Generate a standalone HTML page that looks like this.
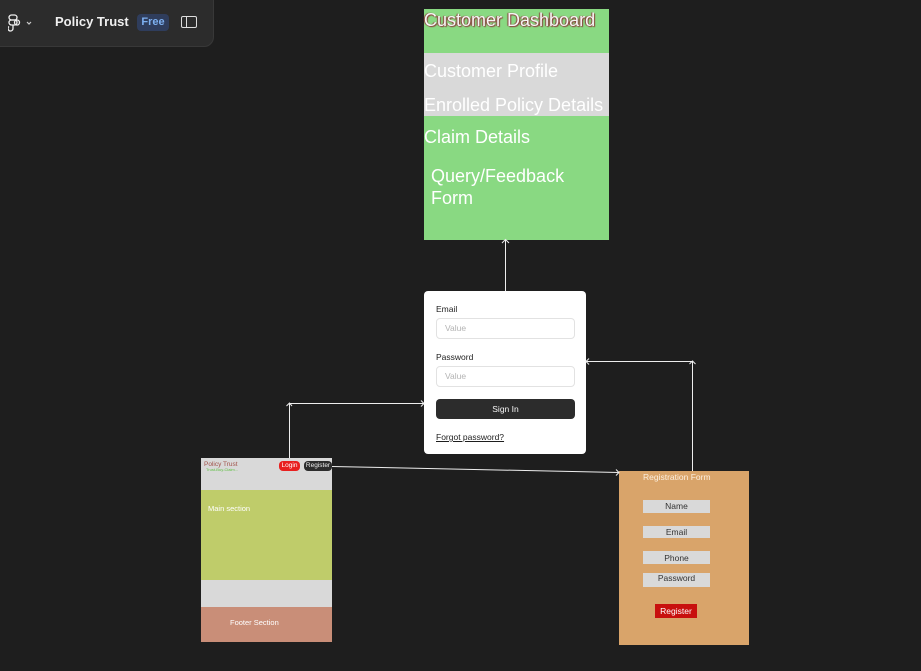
<!DOCTYPE html>
<html><head><style>
body{margin:0;width:921px;height:671px;background:#1e1e1e;position:relative;overflow:hidden;font-family:"Liberation Sans",sans-serif}
.a{position:absolute}
.d{font-size:18px;color:#fff}
</style></head><body>
<div class="a" style="left:-10px;top:-10px;width:222px;height:55px;background:#2c2c2c;border-radius:10px;border:1px solid #383838"></div>
<svg class="a" style="left:8px;top:14px" width="30" height="18" viewBox="0 0 30 18"><g fill="none" stroke="#eee" stroke-width="1.3"><rect x="1" y="1" width="8" height="5" rx="2.5"/><rect x="1" y="6" width="8" height="5" rx="2.5"/><path d="M5 11v3.5a2.5 2.5 0 1 1-4-2"/><circle cx="9" cy="8.5" r="2.5"/></g><path d="M19 8l2 2 2-2" stroke="#ccc" fill="none" stroke-width="1.2"/></svg>
<div class="a" style="left:55px;top:14px;color:#f0f0f0;font-weight:bold;font-size:13px">Policy Trust</div>
<div class="a" style="left:137px;top:14px;width:32px;height:17px;background:#2f3d5c;border-radius:4px;color:#7db0f0;font-size:11px;font-weight:bold;text-align:center;line-height:17px">Free</div>
<div class="a" style="left:181px;top:16px;width:14px;height:10px;border:1.3px solid #ddd;border-radius:2px"></div>
<div class="a" style="left:186px;top:16px;width:1.3px;height:12px;background:#ddd"></div>

<div class="a" style="left:424px;top:9px;width:185px;height:231px;background:#89d982"></div>
<div class="a" style="left:424px;top:53px;width:185px;height:63px;background:#d9d9d9"></div>
<div class="a d" style="left:424px;top:10px;color:#f6f6f6;text-shadow:1px 1px 1px #8a3a3a,-1px 0 1px #8a3a3a">Customer Dashboard</div>
<div class="a d" style="left:424px;top:61px">Customer Profile</div>
<div class="a d" style="left:424px;top:95px">Enrolled Policy Details</div>
<div class="a d" style="left:424px;top:127px">Claim Details</div>
<div class="a d" style="left:431px;top:165px;line-height:22px">Query/Feedback<br>Form</div>

<div class="a" style="left:424px;top:291px;width:162px;height:163px;background:#fff;border-radius:4px"></div>
<div class="a" style="left:436px;top:304px;font-size:8.5px;color:#1e1e1e">Email</div>
<div class="a" style="left:436px;top:318px;width:137px;height:19px;border:1px solid #e2e2e2;border-radius:4px;font-size:8.5px;color:#b3b3b3;line-height:19px;text-indent:8px">Value</div>
<div class="a" style="left:436px;top:352px;font-size:8.5px;color:#1e1e1e">Password</div>
<div class="a" style="left:436px;top:366px;width:137px;height:19px;border:1px solid #e2e2e2;border-radius:4px;font-size:8.5px;color:#b3b3b3;line-height:19px;text-indent:8px">Value</div>
<div class="a" style="left:436px;top:399px;width:139px;height:20px;background:#2c2c2c;border-radius:4px;font-size:8.5px;color:#f5f5f5;text-align:center;line-height:20px">Sign In</div>
<div class="a" style="left:436px;top:432px;font-size:8.5px;color:#1e1e1e;text-decoration:underline">Forgot password?</div>

<div class="a" style="left:201px;top:458px;width:131px;height:32px;background:#d9d9d9"></div>
<div class="a" style="left:201px;top:490px;width:131px;height:90px;background:#bfcc6a"></div>
<div class="a" style="left:201px;top:580px;width:131px;height:27px;background:#d9d9d9"></div>
<div class="a" style="left:201px;top:607px;width:131px;height:35px;background:#c98e78"></div>
<div class="a" style="left:204px;top:461px;font-size:6.5px;color:#a0524a">Policy Trust</div>
<div class="a" style="left:206px;top:467px;font-size:4px;color:#5cbf40">Trust-Buy-Claim...</div>
<div class="a" style="left:279px;top:461px;width:21px;height:10px;background:#e8201f;border-radius:4px;font-size:6.5px;color:#fff;text-align:center;line-height:10px">Login</div>
<div class="a" style="left:304px;top:461px;width:28px;height:10px;background:#2c2c2c;border-radius:4px;font-size:6.5px;color:#eee;text-align:center;line-height:10px">Register</div>
<div class="a" style="left:208px;top:504px;font-size:7.5px;color:#fff">Main section</div>
<div class="a" style="left:230px;top:618px;font-size:7.5px;color:#fff">Footer Section</div>

<div class="a" style="left:619px;top:471px;width:130px;height:174px;background:#d9a46a"></div>
<div class="a" style="left:643px;top:472px;font-size:8.5px;color:#fbeede">Registration Form</div>
<div class="a" style="left:643px;top:500px;width:67px;height:13px;background:#d9d9d9;font-size:8.5px;text-align:center;line-height:13px;color:#333">Name</div>
<div class="a" style="left:643px;top:526px;width:67px;height:12px;background:#d9d9d9;font-size:8.5px;text-align:center;line-height:12px;color:#333">Email</div>
<div class="a" style="left:643px;top:551px;width:67px;height:13px;background:#d9d9d9;font-size:8.5px;text-align:center;line-height:14px;color:#333">Phone</div>
<div class="a" style="left:643px;top:573px;width:67px;height:14px;background:#d9d9d9;font-size:8.5px;text-align:center;line-height:11px;color:#333">Password</div>
<div class="a" style="left:655px;top:604px;width:42px;height:14px;background:#c8100e;font-size:8.5px;text-align:center;line-height:14px;color:#fff">Register</div>

<svg class="a" style="left:0;top:0" width="921" height="671"><g stroke="#eee" stroke-width="1" fill="none">
<path d="M505.5 291V240M502 243l3.5-3.5 3.5 3.5"/>
<path d="M289.5 458V403.5H424M292 406l-2.5-3 -3 3M421 400.5l3 3-3 3"/>
<path d="M332 466.5L619 472.5M616 469.5l3 3-3 3"/>
<path d="M692.5 471V361.5H586M589 358.5l-3 3 3 3M689.5 364l3-3 3 3"/>
</g></svg>
</body></html>
